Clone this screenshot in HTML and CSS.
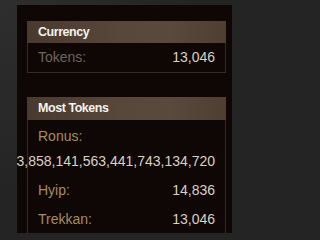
FILE: index.html
```html
<!DOCTYPE html>
<html>
<head>
<meta charset="utf-8">
<link rel="stylesheet" href="styles.css">
</head>
<body>
<div class="stage">
  <div class="panel">
    <section class="box">
      <h2 class="box-head">Currency</h2>
      <div class="row">
        <span class="label muted">Tokens:</span>
        <span class="value">13,046</span>
      </div>
    </section>
    <section class="box box-open">
      <h2 class="box-head">Most Tokens</h2>
      <div class="row row-wide">
        <span class="label">Ronus:</span>
        <div class="wide-line"><span class="value">3,858,141,563,441,743,134,720</span></div>
      </div>
      <div class="row">
        <span class="label">Hyip:</span>
        <span class="value">14,836</span>
      </div>
      <div class="row">
        <span class="label">Trekkan:</span>
        <span class="value">13,046</span>
      </div>
    </section>
  </div>
</div>
</body>
</html>
```
FILE: styles.css
```css
html, body {
  margin: 0;
  padding: 0;
  background: #242424;
}
body {
  font-family: "Liberation Sans", Arial, sans-serif;
  font-size: 14px;
}
.stage {
  width: 232px;
  height: 233px;
  overflow: hidden;
  background: #242424;
  background-image: radial-gradient(circle at 0 0, #2e2e2e 0, #242424 60%);
  padding-top: 5px;
  box-sizing: border-box;
}
.panel {
  margin-left: 17px;
  width: 215px;
  height: 240px;
  background: #0e0705;
  padding: 16px 6px 0 10px;
  box-sizing: border-box;
}
.box {
  border: 1px solid #3b2a21;
  border-top: none;
  margin-bottom: 24px;
}
.box-open {
  border-bottom: none;
}
.box-head {
  margin: 0 -1px;
  height: 22px;
  line-height: 23px;
  padding-left: 11px;
  background: linear-gradient(to right, #4a392e 0%, #57463a 45%, #5a4a3d 70%, #4f3e32 100%);
  color: #f6f2ec;
  font-size: 12.5px;
  font-weight: bold;
  letter-spacing: -0.45px;
}
.box-open .box-head {
  height: 23px;
}
.row {
  display: flex;
  justify-content: space-between;
  padding: 7px 10px;
  line-height: 15px;
}
.row-wide {
  display: block;
  padding-top: 9px;
}
.wide-line {
  display: flex;
  justify-content: flex-end;
  margin-top: 10px;
  white-space: nowrap;
}
.label {
  color: #a68c5e;
}
.label.muted {
  color: #6e645a;
}
.value {
  color: #ddd0c1;
}
```
